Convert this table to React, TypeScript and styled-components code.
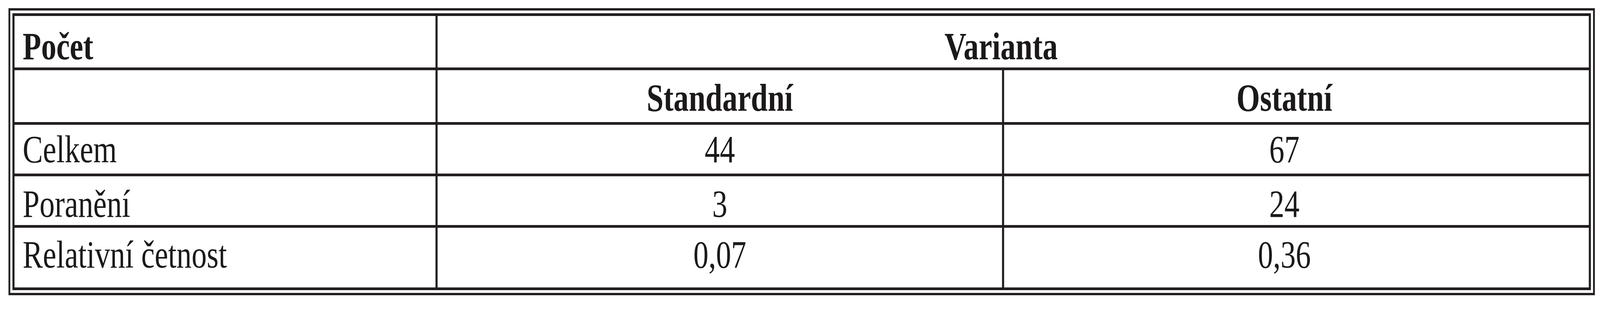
import * as React from "react"
import { useEffect, useState } from "react"
import styled, { createGlobalStyle } from "styled-components"

// the table is drawn on a 5287 x 800 sheet (the size of the source picture)
// and that sheet is fitted to whatever viewport the page gets
const SHEET_W = 5287
const SHEET_H = 800

const GlobalStyle = createGlobalStyle`
    html, body {
        margin: 0;
        padding: 0;
        background: #ffffff;
        overflow: hidden;
    }
`

const ink = "#231f20"

const Sheet = styled.div`
    width: ${SHEET_W}px;
    height: ${SHEET_H}px;
    box-sizing: border-box;
    padding: 21px 0 0 28px;
    transform-origin: 0 0;
    background: #ffffff;
`

const Frame = styled.div`
    display: inline-block;
    border: 6px solid ${ink};
    padding: 7px;
    background: #ffffff;
`

const Grid = styled.div`
    display: grid;
    grid-template-columns: 1391px 1865px 1932px;
    grid-template-rows: 132px 133px 125px 125px 153px;
    gap: 7px;
    padding: 7px;
    background: ${ink};
    font-family: "Liberation Serif", "Times New Roman", serif;
    font-size: 100px;
    line-height: 100px;
    color: #1c191a;
`

type CellProps = {
    $bold?: boolean
    $align?: "left" | "center"
    $top: number
    $span?: number
    $right?: boolean
}

const Cell = styled.div<CellProps>`
    background: #ffffff;
    box-sizing: border-box;
    overflow: hidden;
    padding-top: ${p => p.$top}px;
    padding-left: ${p => (p.$align === "center" ? 0 : 27)}px;
    padding-right: ${p => (p.$right ? 80 : 0)}px;
    text-align: ${p => p.$align || "left"};
    font-weight: ${p => (p.$bold ? 700 : 400)};
    white-space: nowrap;
    grid-column: span ${p => p.$span || 1};
`

const rows = [
    { label: "Celkem", a: "44", b: "67", top: 13 },
    { label: "Poranění", a: "3", b: "24", top: 21 },
    { label: "Relativní četnost", a: "0,07", b: "0,36", top: 19 },
]

function fit() {
    return {
        x: window.innerWidth / SHEET_W,
        y: window.innerHeight / SHEET_H,
    }
}

export default function App() {
    const [scale, setScale] = useState(fit)

    useEffect(() => {
        const onResize = () => setScale(fit())
        window.addEventListener("resize", onResize)
        return () => window.removeEventListener("resize", onResize)
    }, [])

    return (
        <Sheet style={{ transform: `scale(${scale.x}, ${scale.y})` }}>
            <GlobalStyle />
            <Frame>
                <Grid>
                    <Cell $bold $top={28}>Počet</Cell>
                    <Cell $bold $align="center" $span={2} $right $top={28}>Varianta</Cell>

                    <Cell $top={21} />
                    <Cell $bold $align="center" $top={21}>Standardní</Cell>
                    <Cell $bold $align="center" $right $top={21}>Ostatní</Cell>

                    {rows.map(r => (
                        <React.Fragment key={r.label}>
                            <Cell $top={r.top}>{r.label}</Cell>
                            <Cell $align="center" $top={r.top}>{r.a}</Cell>
                            <Cell $align="center" $right $top={r.top}>{r.b}</Cell>
                        </React.Fragment>
                    ))}
                </Grid>
            </Frame>
        </Sheet>
    )
}
